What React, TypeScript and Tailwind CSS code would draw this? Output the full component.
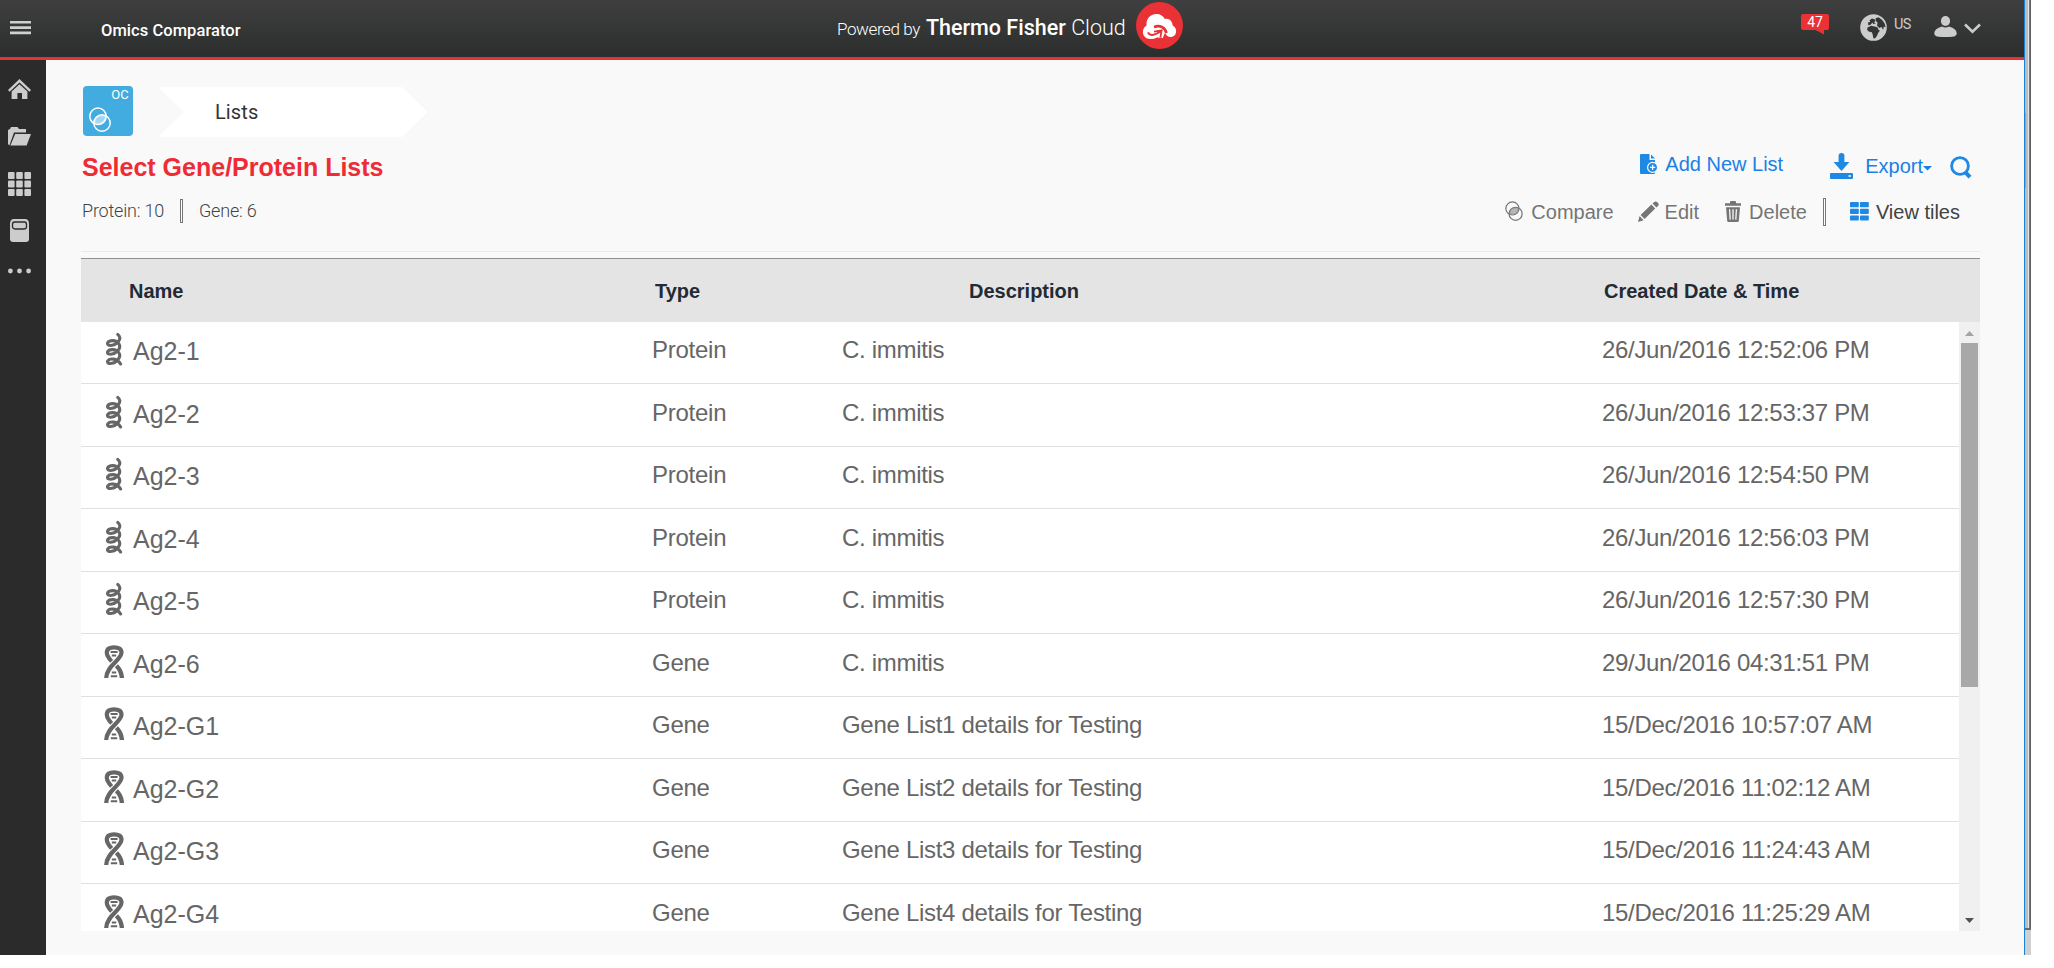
import React from "react";

type Kind = "Protein" | "Gene";

const rows: { name: string; type: Kind; desc: string; date: string }[] = [
  { name: "Ag2-1", type: "Protein", desc: "C. immitis", date: "26/Jun/2016 12:52:06 PM" },
  { name: "Ag2-2", type: "Protein", desc: "C. immitis", date: "26/Jun/2016 12:53:37 PM" },
  { name: "Ag2-3", type: "Protein", desc: "C. immitis", date: "26/Jun/2016 12:54:50 PM" },
  { name: "Ag2-4", type: "Protein", desc: "C. immitis", date: "26/Jun/2016 12:56:03 PM" },
  { name: "Ag2-5", type: "Protein", desc: "C. immitis", date: "26/Jun/2016 12:57:30 PM" },
  { name: "Ag2-6", type: "Gene", desc: "C. immitis", date: "29/Jun/2016 04:31:51 PM" },
  { name: "Ag2-G1", type: "Gene", desc: "Gene List1 details for Testing", date: "15/Dec/2016 10:57:07 AM" },
  { name: "Ag2-G2", type: "Gene", desc: "Gene List2 details for Testing", date: "15/Dec/2016 11:02:12 AM" },
  { name: "Ag2-G3", type: "Gene", desc: "Gene List3 details for Testing", date: "15/Dec/2016 11:24:43 AM" },
  { name: "Ag2-G4", type: "Gene", desc: "Gene List4 details for Testing", date: "15/Dec/2016 11:25:29 AM" },
];

function ProteinIcon() {
  return (
    <svg className="h-[34px] w-5 shrink-0" viewBox="0 0 20 34" fill="none" stroke="#666" strokeWidth="3.1" strokeLinecap="round">
      <path d="M13.8 2.4C17.8 5.4 15.4 10.2 10 12.8C5 14.4 2.8 12.8 3.8 10.6C5.4 8 12 7.6 14.6 11.3C17 14.6 15.5 18.8 10 21.6C5 23.2 2.8 21.6 3.8 19.4C5.4 17 12 16.8 14.6 20.3C17 23.4 15.5 28 10 30.8C5 32.4 2.8 31 3.8 28.8C5.4 26.4 13 25.6 16.6 32" />
    </svg>
  );
}

function GeneIcon() {
  return (
    <svg className="h-[34px] w-5 shrink-0" viewBox="0 0 20 34" fill="none" stroke="#666">
      <path d="M7.6 16.4C4 12.6 2.8 10.4 2.8 7.6C2.8 3.9 5.6 2.4 10 2.4C14.6 2.4 17.5 3.9 17.5 7.6C17.5 15.4 2.4 20.6 2.2 33" strokeWidth="4.2" />
      <path d="M12.4 20.8C15.6 24 17.6 27.5 17.9 33" strokeWidth="4.4" />
      <path d="M6.6 7H13.6M7.8 10.4H12.2M7.8 27.6H12.2M6.8 31.2H13.2" strokeWidth="2" />
    </svg>
  );
}

function CirclesIcon({ className, strokeWidth }: { className: string; strokeWidth: number }) {
  return (
    <svg className={className} viewBox="0 0 22 25" fill="none" stroke="currentColor" strokeWidth={strokeWidth}>
      <circle cx="9" cy="9.3" r="8.2" />
      <circle cx="13" cy="16" r="8.2" />
      <path d="M5.6 15.5C6.5 10 11 7.5 16.4 9.5C15.8 15 11 17.8 5.6 15.5Z" fill="currentColor" fillOpacity="0.5" strokeWidth="0.6" />
    </svg>
  );
}

function TopBar() {
  return (
    <header className="flex h-[60px] items-start border-b-[3px] border-[#ea3136] bg-linear-to-b from-[#3f3f3f] to-[#2b2e2d] font-[Roboto,sans-serif] text-white">
      <svg className="mt-[21px] ml-[10px] h-[14px] w-[21px]" viewBox="0 0 21 14" fill="#d0d0d0">
        <path d="M0 0H21V2.6H0ZM0 5.3H21V7.9H0ZM0 10.6H21V13.2H0Z" />
      </svg>
      <div className="mt-[19px] ml-[70px] w-[736px] text-[16.5px] leading-6 font-medium tracking-[0.05px]">Omics Comparator</div>
      <div className="flex w-[289px] items-baseline whitespace-nowrap pt-[12px] leading-8">
        <span className="text-[17px] font-light tracking-[-0.4px]">Powered by</span>
        <span className="ml-[6px] text-[21.5px]">
          <span className="font-medium">Thermo Fisher</span> <span className="font-light">Cloud</span>
        </span>
      </div>
      <svg className="mt-[2px] ml-[10px] h-[47px] w-[47px]" viewBox="0 0 47 47">
        <circle cx="23.5" cy="23.5" r="23.5" fill="#ea3136" />
        <path d="M15 37C10 37.4 6.7 33.8 6.9 29.8C7 26.5 8.8 24.6 10.6 23.6C9.6 17.5 14 12 20.5 12C24.5 12 27.3 14 28.8 17C33 16 36.5 19 36.6 23.6C39.4 25 40.6 27.8 40 30.6C39.4 33.6 37 35.2 34 35C31.4 34.6 30 33 29 30.6L26.8 36L21 35.4Q18 37 15 37Z" fill="#fff" />
        <path d="M30.4 31C29.4 25.4 23.4 22.6 18 25.2" fill="none" stroke="#ea3136" strokeWidth="2.6" />
        <path d="M12 30.4C13.5 34 18 34 24.4 29.6M18 29.6L25.6 28.4L24.4 35.6" fill="none" stroke="#ea3136" strokeWidth="1.8" />
      </svg>
      <svg className="mt-[14px] ml-[618px] h-[21px] w-[28px]" viewBox="0 0 28 21">
        <path d="M2 0H26Q28 0 28 2V14Q28 16 26 16H23V20.6L14.5 16H2Q0 16 0 14V2Q0 0 2 0Z" fill="#ea3136" />
        <text x="14" y="13.2" textAnchor="middle" fontSize="14" fill="#fff" fontFamily="Roboto, sans-serif">47</text>
      </svg>
      <svg className="mt-[14px] ml-[31px] h-[27px] w-[27px]" viewBox="0 0 27 27">
        <circle cx="13.5" cy="13.5" r="13.3" fill="#ccc" />
        <g fill="#343635">
          <path d="M9.5 6.2L12 4.4L14.5 5.2L15.6 6.8L14 8.2L15.8 9.6L13.2 10L12.4 8.6L10.6 10.8L8.2 11.2L8 8.6L10.4 7.8Z" />
          <path d="M7.6 13.4L11 11.8L14.4 12.4L17.4 13.2L18.8 16.2L20 16.6L18 19.2L17.2 21.6L15 24.6L13.4 24.2L12.6 20.2L11.8 18.2L8.6 17.6L7 15.6Z" />
          <path d="M15.4 4.6L18.4 3.2L22 5.8L24.8 9.8L25.6 13.6L23.8 12.6L23.2 16L21.4 13L19.2 14L17 11.6L17.6 9L16 7Z" />
        </g>
      </svg>
      <span className="mt-[13px] ml-[7px] w-[20px] text-[14.5px] leading-6 tracking-[-0.6px] text-[#ccc]">US</span>
      <svg className="mt-[16px] ml-[20px] h-[21px] w-[23px]" viewBox="0 0 23 21" fill="#ccc">
        <ellipse cx="11.5" cy="5" rx="4.6" ry="5" />
        <path d="M8 10.4Q11.5 12.4 15 10.4Q22.6 12.4 22.8 17.5Q22.6 21 15 21H8Q.4 21 .2 17.5Q.4 12.4 8 10.4Z" />
      </svg>
      <svg className="mt-[23px] ml-[7px] h-[11px] w-[17px]" viewBox="0 0 17 11" fill="none" stroke="#ccc" strokeWidth="2.6">
        <path d="M1 1.5L8.5 8.7L16 1.5" />
      </svg>
    </header>
  );
}

function SideBar() {
  return (
    <nav className="flex w-[46px] shrink-0 flex-col items-start bg-[#2b2b2b] pl-[8px] text-[#ccc]">
      <svg className="mt-[19px] h-[20px] w-[23px]" viewBox="0 0 23 20" fill="currentColor">
        <path d="M11.5 0L23 11L21.4 12.8L11.5 3.4L1.6 12.8L0 11Z" />
        <path d="M11.5 5.2L19.4 12.6V20H14V14H9.4V20H3.6V12.6Z" />
      </svg>
      <svg className="mt-[28px] h-[19px] w-[23px]" viewBox="0 0 23 19" fill="currentColor">
        <path d="M0 17V3L2 2L3 0H9.5L11 2H18V5.6H6L1.4 18.6Z" />
        <path d="M7.2 7H23L18.6 18.6H2.4Z" />
      </svg>
      <svg className="mt-[26px] h-[24px] w-[23px]" viewBox="0 0 23 24" fill="currentColor">
        {[0, 8.5, 17].map((y) =>
          [0, 8.2, 16.4].map((x) => <rect key={`${x}-${y}`} x={x} y={y} width="6.6" height="7" rx="1" />)
        )}
      </svg>
      <svg className="mt-[23px] ml-[2px] h-[23px] w-[19px]" viewBox="0 0 19 23">
        <path d="M4 0H15Q19 0 19 5V20Q19 23 16 23H3Q0 23 0 20V5Q0 0 4 0Z" fill="currentColor" />
        <path d="M4.5 3H14.5Q16.5 3 16.5 5.5V7.5Q16.5 10 14 10H5Q2.5 10 2.5 7.5V5.5Q2.5 3 4.5 3Z" fill="#ccc" stroke="#2b2b2b" strokeWidth="1.3" />
      </svg>
      <svg className="mt-[26px] h-[6px] w-[23px]" viewBox="0 0 23 6" fill="currentColor">
        <circle cx="2.4" cy="3" r="2.4" />
        <circle cx="11.5" cy="3" r="2.4" />
        <circle cx="20.6" cy="3" r="2.4" />
      </svg>
    </nav>
  );
}

function Breadcrumb() {
  return (
    <div className="flex h-[52px] items-start pl-[2px]">
      <div className="flex h-[50px] w-[50px] flex-col rounded-[4px] bg-[#42abe0] text-white">
        <span className="self-end pr-[4px] pt-[1px] font-[Roboto,sans-serif] text-[13px] leading-[16px] tracking-[0.2px]">OC</span>
        <CirclesIcon className="mt-[4px] ml-[6px] h-[25px] w-[22px]" strokeWidth={1.5} />
      </div>
      <div className="mt-px ml-[25px] flex h-[50px] w-[270px] items-center bg-white pl-[57px] [clip-path:polygon(0_0,244px_0,100%_50%,244px_100%,0_100%,26px_50%)]">
        <span className="font-[Roboto,sans-serif] text-[20px] tracking-[0.1px] text-[#333]">Lists</span>
      </div>
    </div>
  );
}

function Toolbar() {
  return (
    <div className="flex flex-col items-end whitespace-nowrap text-[20px] leading-6">
      <div className="flex h-[46px] items-start text-[#1a80e6]">
        <svg className="mt-[6px] h-[20px] w-[18px]" viewBox="0 0 18 20">
          <path d="M0 1Q0 0 1 0H9.5V6H15V19Q15 20 14 20H1Q0 20 0 19Z" fill="#1e88e5" />
          <path d="M11 .6L15 4.6H11Z" fill="#1e88e5" />
          <circle cx="12.6" cy="13.4" r="5" fill="#1e88e5" stroke="#f9f9f9" strokeWidth="1.2" />
          <path d="M12.6 10.8V16M10 13.4H15.2" stroke="#f9f9f9" strokeWidth="1.3" />
        </svg>
        <span className="ml-[7px] mt-[4px]">Add New List</span>
        <svg className="mt-[5px] ml-[47px] h-[26px] w-[23px]" viewBox="0 0 23 26" fill="#1e88e5">
          <path d="M8.6 2.5Q8.6 0 11.5 0T14.4 2.5V9H19.4L11.5 18L3.6 9H8.6Z" />
          <path d="M1 20H22Q23 20 23 21V25Q23 26 22 26H1Q0 26 0 25V21Q0 20 1 20ZM18.4 22.2V23.8H21V22.2Z" fillRule="evenodd" />
        </svg>
        <span className="ml-[12px] mt-[6px]">Export</span>
        <svg className="mt-[18px] h-[5px] w-[9px]" viewBox="0 0 9 5" fill="#1a80e6">
          <path d="M0 0H9L4.5 4.6Z" />
        </svg>
        <svg className="mt-[8px] mr-[8px] ml-[18px] h-[23px] w-[22px]" viewBox="0 0 22 23" fill="none" stroke="#1e88e5">
          <circle cx="10" cy="10" r="8.4" strokeWidth="2.8" />
          <path d="M15 15.8L20 21.2" strokeWidth="4" />
        </svg>
      </div>
      <div className="flex h-[30px] items-start text-[#757575]">
        <CirclesIcon className="mt-[7px] h-[20px] w-[18px]" strokeWidth={1.5} />
        <span className="ml-[8px] mt-[6px]">Compare</span>
        <svg className="mt-[7px] ml-[24px] h-[21px] w-[21px]" viewBox="0 0 21 21" fill="#757575">
          <path d="M0 21L1.6 15L5.6 19.2ZM2.6 14L13.4 3.6L17.2 7.4L6.6 18ZM14.6 2.6L16 1.2Q17.6 -.4 19.6 1.4Q21.6 3.4 20 5L18.4 6.4Z" />
        </svg>
        <span className="ml-[6px] mt-[6px]">Edit</span>
        <svg className="mt-[7px] ml-[26px] h-[21px] w-[16px]" viewBox="0 0 16 21">
          <path d="M0 2.2H5V1Q5 0 6 0H10Q11 0 11 1V2.2H16V4.8H0Z" fill="#757575" />
          <path d="M1 6.2H15L13.8 20Q13.7 21 12.6 21H3.4Q2.3 21 2.2 20Z" fill="#757575" />
          <path d="M4.6 8.2L5.2 18.6M8 8.2V18.6M11.4 8.2L10.8 18.6" stroke="#f9f9f9" strokeWidth="1.3" />
        </svg>
        <span className="ml-[8px] mt-[6px]">Delete</span>
        <span className="mt-[4px] ml-[16px] h-[28px] w-[3px] border border-[#777] bg-white" />
        <svg className="mt-[8px] ml-[24px] h-[19px] w-[19px]" viewBox="0 0 19 19" fill="#1e88e5">
          {[0, 6.7, 13.4].map((y) => (
            <React.Fragment key={y}>
              <rect x="0" y={y} width="8.8" height="5.2" rx="0.8" />
              <rect x="10" y={y} width="8.8" height="5.2" rx="0.8" />
            </React.Fragment>
          ))}
        </svg>
        <span className="mt-[6px] mr-[20px] ml-[7px] text-[#424242]">View tiles</span>
      </div>
    </div>
  );
}

function Table() {
  return (
    <section className="mt-[6px] w-[1899px] border-t border-[#8f8f8f]">
      <div className="flex h-[63px] items-center bg-[#e4e4e4] text-[20px] font-bold text-[#232a34]">
        <span className="w-[526px] pl-[48px]">Name</span>
        <span className="w-[313px] pl-[48px]">Type</span>
        <span className="w-[635px] pl-[49px]">Description</span>
        <span className="pl-[49px]">Created Date &amp; Time</span>
      </div>
      <div className="flex h-[609px] overflow-hidden">
        <div className="w-[1878px] bg-white text-[24px] text-[#666]">
          {rows.map((r, i) => (
            <div
              key={r.name}
              className={`flex items-start whitespace-nowrap border-b border-[#e0e0e0] leading-7 ${i % 2 ? "h-[63px]" : "h-[62px]"}`}
            >
              <div className={`flex w-[571px] items-start pl-[23px] ${i % 2 ? "pt-[11px]" : "pt-[10px]"}`}>
                {r.type === "Protein" ? <ProteinIcon /> : <GeneIcon />}
                <span className="mt-[5px] ml-[9px] text-[25px]">{r.name}</span>
              </div>
              <div className={`w-[190px] tracking-[-0.25px] ${i % 2 ? "pt-[15px]" : "pt-[14px]"}`}>{r.type}</div>
              <div className={`w-[760px] tracking-[-0.3px] ${i % 2 ? "pt-[15px]" : "pt-[14px]"}`}>{r.desc}</div>
              <div className={`tracking-[-0.32px] ${i % 2 ? "pt-[15px]" : "pt-[14px]"}`}>{r.date}</div>
            </div>
          ))}
        </div>
        <div className="flex w-[21px] flex-col items-center bg-[#f0f0f0]">
          <svg className="mt-[9px] h-[5px] w-[9px]" viewBox="0 0 9 5" fill="#a3a3a3">
            <path d="M0 5L4.5 0L9 5Z" />
          </svg>
          <div className="mt-[7px] h-[344px] w-[17px] bg-[#a8a8a8]" />
          <svg className="mt-auto mb-[8px] h-[5px] w-[9px]" viewBox="0 0 9 5" fill="#505050">
            <path d="M0 0H9L4.5 5Z" />
          </svg>
        </div>
      </div>
    </section>
  );
}

export default function App() {
  return (
    <div className="flex h-[968px] w-[2054px] items-start overflow-hidden bg-white font-['Liberation_Sans',Arial,sans-serif]">
      <div className="flex h-[955px] w-[2024px] shrink-0 flex-col bg-[#f9f9f9]">
        <TopBar />
        <div className="flex flex-1">
          <SideBar />
          <main className="flex flex-1 flex-col pt-[26px] pl-[35px]">
            <Breadcrumb />
            <div className="flex h-[113px] w-[1899px] justify-between">
              <div className="pl-px pt-[13px]">
                <h1 className="text-[25px] leading-8 font-bold text-[#ef2b36]">Select Gene/Protein Lists</h1>
                <div className="mt-[16px] flex items-center font-[Roboto,sans-serif] text-[18px] leading-6 font-light text-[#444]">
                  <span className="w-[98px] tracking-[-0.2px]">Protein: 10</span>
                  <span className="h-[24px] w-[3px] border border-[#777] bg-white" />
                  <span className="ml-[16px] tracking-[-0.2px]">Gene: 6</span>
                </div>
              </div>
              <div className="pt-[10px]">
                <Toolbar />
              </div>
            </div>
            <hr className="w-[1899px] border-t border-[#ebebeb]" />
            <Table />
          </main>
        </div>
      </div>
      <div className="h-[955px] w-px bg-[#1883d7]" />
      <div className="h-[955px] w-[6px] bg-[#cfcfcf]">
        <div className="flex h-[930px] border-b-2 border-[#6a6a6a]">
          <div className="w-px bg-[#bdbdbd] pt-[113px]">
            <div className="h-[75px] bg-[#a0a0a0]" />
          </div>
          <div className="w-[2px] bg-[#bdbdbd]" />
          <div className="w-px bg-[#e3e3e3]" />
          <div className="w-px bg-[#7a7a7a]" />
          <div className="w-px bg-[#5e5e5e]" />
        </div>
      </div>
    </div>
  );
}
